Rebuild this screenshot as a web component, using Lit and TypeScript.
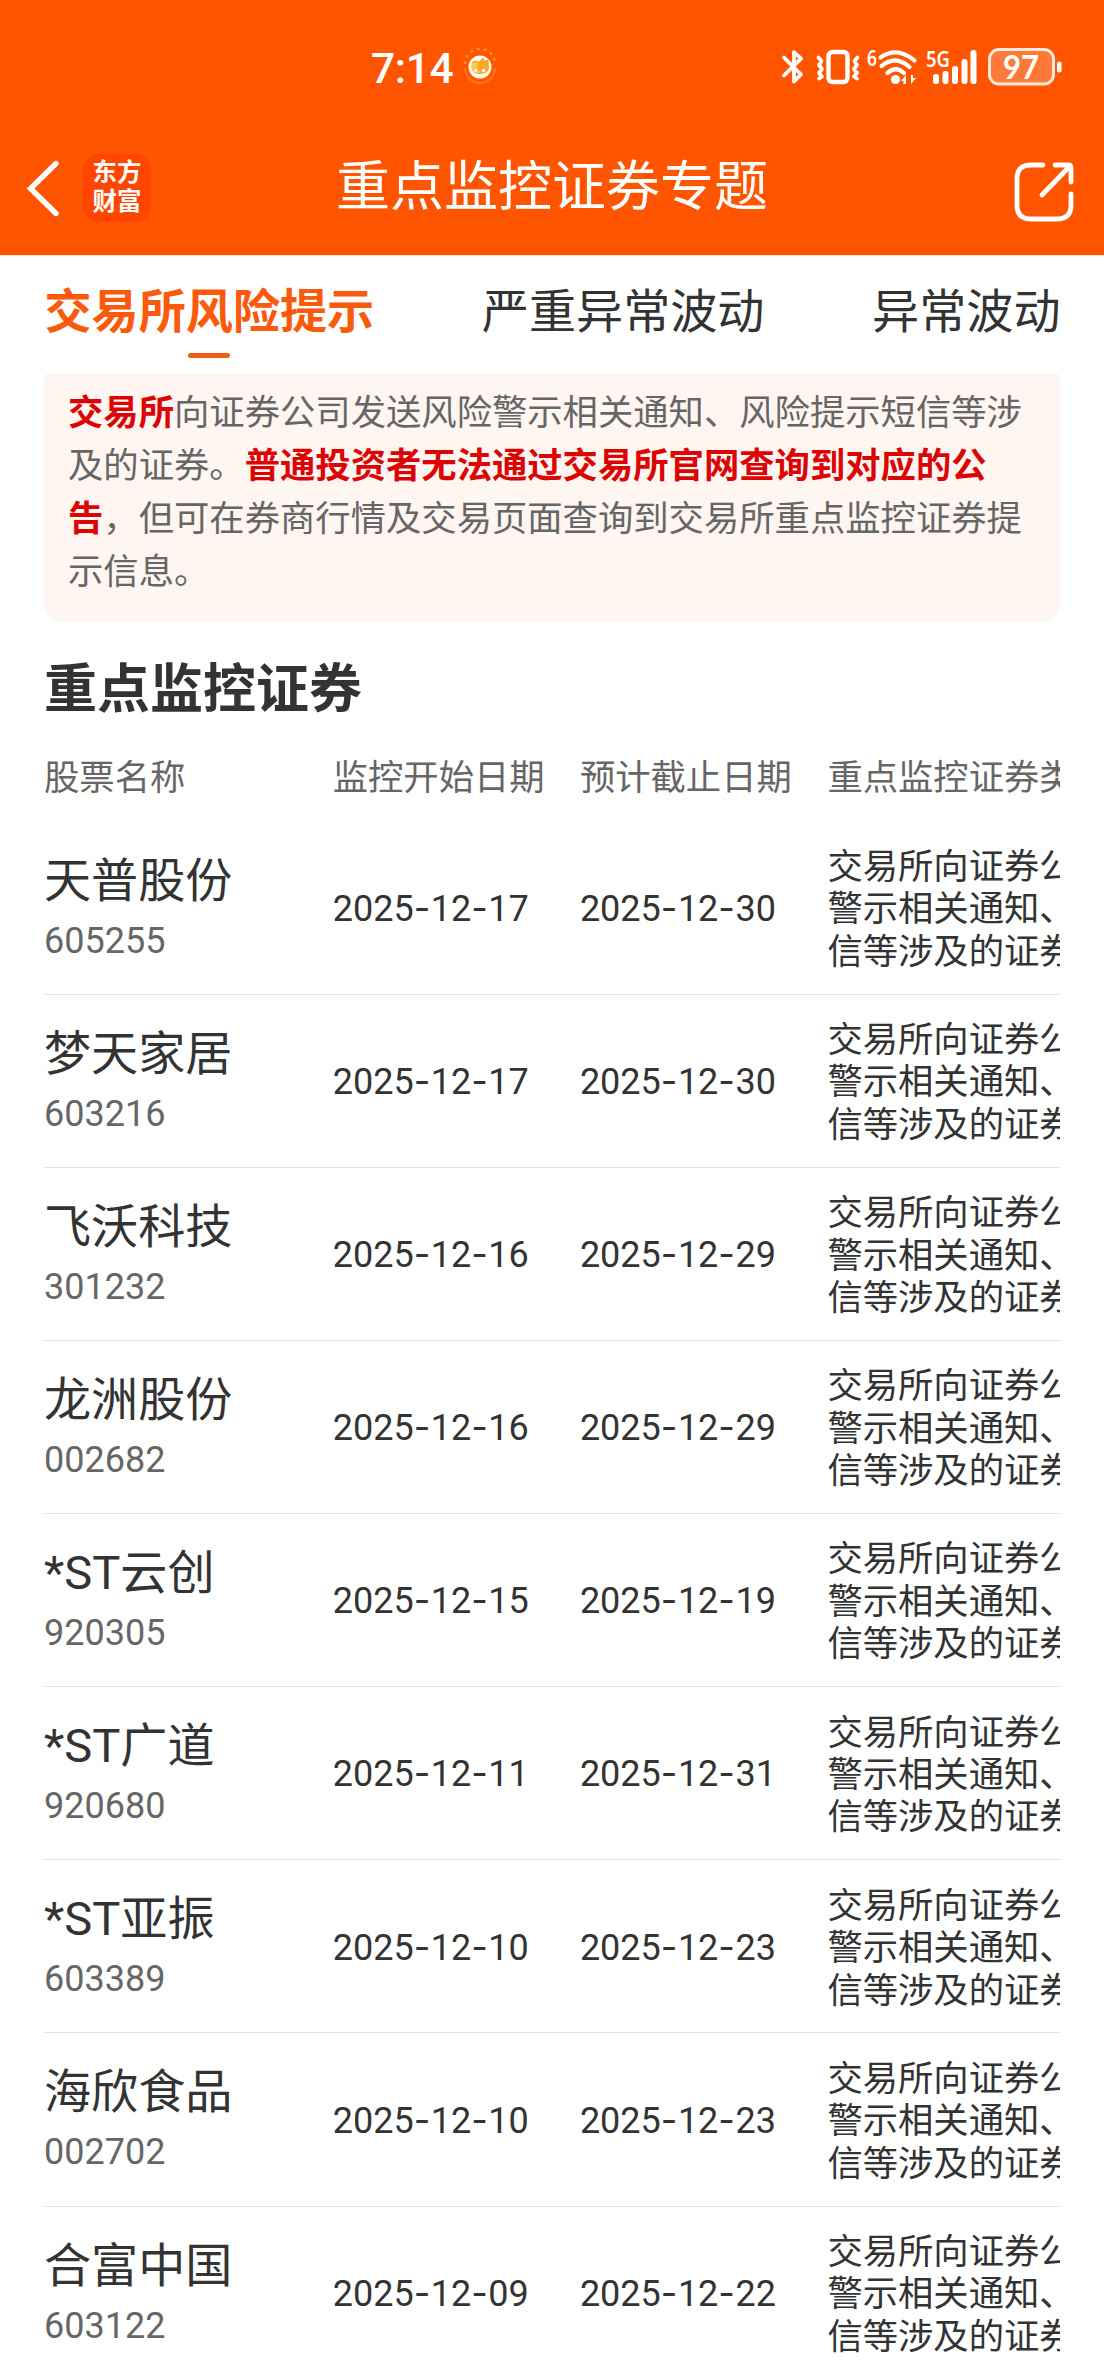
import { LitElement, html, css } from "lit";
import { customElement, property } from "lit/decorators.js";

interface Stock {
  name: string;
  code: string;
  start: string;
  end: string;
}

const STOCKS: Stock[] = [
  { name: "天普股份", code: "605255", start: "2025-12-17", end: "2025-12-30" },
  { name: "梦天家居", code: "603216", start: "2025-12-17", end: "2025-12-30" },
  { name: "飞沃科技", code: "301232", start: "2025-12-16", end: "2025-12-29" },
  { name: "龙洲股份", code: "002682", start: "2025-12-16", end: "2025-12-29" },
  { name: "*ST云创", code: "920305", start: "2025-12-15", end: "2025-12-19" },
  { name: "*ST广道", code: "920680", start: "2025-12-11", end: "2025-12-31" },
  { name: "*ST亚振", code: "603389", start: "2025-12-10", end: "2025-12-23" },
  { name: "海欣食品", code: "002702", start: "2025-12-10", end: "2025-12-23" },
  { name: "合富中国", code: "603122", start: "2025-12-09", end: "2025-12-22" },
];

const TYPE_LINES = ["交易所向证券公", "警示相关通知、", "信等涉及的证券"];

@customElement("status-bar")
class StatusBar extends LitElement {
  static styles = css`
    :host {
      display: flex;
      height: 134px;
      padding: 0 42px 0 371px;
      align-items: center;
      box-sizing: border-box;
      color: #fff;
    }
    .time {
      font: 500 42.500px/50px Roboto, "Noto Sans", sans-serif;
      padding-top: 3px;
      letter-spacing: -0.300px;
    }
    .face {
      margin-left: 10px;
    }
    .spacer {
      flex: 1;
    }
    svg {
      display: block;
      flex: none;
      overflow: visible;
    }
    .bt { margin-right: 12px; }
    .vib { margin-right: 8px; }
    .wifi { margin-right: 8px; }
    .cell { margin-right: 11px; }
    .small {
      font: 600 22px "Noto Sans", sans-serif;
    }
    .level {
      font: 700 33px Lato, "Noto Sans", sans-serif;
    }
  `;

  render() {
    return html`
      <span class="time">7:14</span>
      <svg class="face" width="34" height="34" viewBox="0 0 34 34">
        <path d="M2 14a15 15 0 0 1 30 0" fill="none" stroke="#ff9a1f" stroke-width="2.600" stroke-dasharray="2.600 4.200"></path>
        <path d="M2 18a15 15 0 0 0 30 0" fill="none" stroke="#ff7526" stroke-width="2"></path>
        <circle cx="17" cy="17" r="11.500" fill="#fffbe8"></circle>
        <path d="M9 12l3-1.500 4 1 4-4 2 3 3.500-1 .5 9q-2 5.500-9 5.500t-8.500-6z" fill="#ffa62e"></path>
        <path d="M9 13l5-1q1 8 4 11-8 1-9-5z" fill="#ffc64a"></path>
        <circle cx="12.500" cy="20.500" r="1.500" fill="#fff"></circle>
        <circle cx="20.500" cy="20.500" r="1.700" fill="#fff"></circle>
      </svg>
      <span class="spacer"></span>
      <svg class="bt" width="22" height="36" viewBox="0 0 22 36" fill="none" stroke="#fff" stroke-width="3.800" stroke-linejoin="round" stroke-linecap="round">
        <path d="M2 8.500L19 25.500L12 32.500V3.200L19 9.700L2 26.500"></path>
      </svg>
      <svg class="vib" width="44" height="36" viewBox="0 0 44 36" fill="none" stroke="#fff" stroke-linejoin="round" stroke-linecap="round">
        <rect x="12.500" y="3" width="19" height="30" rx="4" stroke-width="4.400"></rect>
        <path d="M2.500 8.500l3 3.500-2.500 4 3 4-3 4 3 3.500-3 2M41.500 8.500l-3 3.500 2.500 4-3 4 3 4-3 3.500 3 2" stroke-width="3.800"></path>
      </svg>
      <svg class="wifi" width="50" height="38" viewBox="0 0 50 38">
        <text class="small" x="-1" y="18" fill="#fff" textLength="10" lengthAdjust="spacingAndGlyphs">6</text>
        <g fill="none" stroke="#fff" stroke-width="4.200" stroke-linecap="round">
          <path d="M12.500 9.500Q29 -2 46.500 12.500"></path>
          <path d="M13.500 18Q27.500 6.500 41.500 19"></path>
          <path d="M19.500 25Q27.500 17.500 36 25"></path>
        </g>
        <circle cx="27.500" cy="31.500" r="4.600" fill="#fff"></circle>
        <path d="M33 33l5-6v9h-2.600v-3zM48 30l-5 6v-9h2v3z" fill="#fff"></path>
      </svg>
      <svg class="cell" width="51" height="38" viewBox="0 0 51 38" fill="#fff">
        <text class="small" x="0" y="18.500" textLength="24" lengthAdjust="spacingAndGlyphs">5G</text>
        <rect x="7" y="26" width="6" height="10" rx="2.800"></rect>
        <rect x="16.500" y="23" width="6" height="13" rx="2.800"></rect>
        <rect x="26" y="18" width="6" height="18" rx="2.800"></rect>
        <rect x="35.500" y="11" width="6" height="25" rx="2.800"></rect>
        <rect x="44.500" y="2" width="6" height="34" rx="2.800"></rect>
      </svg>
      <svg width="74" height="38" viewBox="0 0 74 38">
        <rect x="1.500" y="1.500" width="64" height="34.500" rx="9.500" fill="#ff7a38" stroke="#ffe9dc" stroke-width="3"></rect>
        <rect x="69" y="13.500" width="4.500" height="11" rx="2" fill="#fff"></rect>
        <text class="level" x="33" y="30.500" text-anchor="middle" fill="#fff" textLength="36" lengthAdjust="spacingAndGlyphs">97</text>
      </svg>
    `;
  }
}

@customElement("title-bar")
class TitleBar extends LitElement {
  static styles = css`
    :host {
      display: grid;
      grid-template-columns: 1fr auto 1fr;
      align-items: center;
      height: 121px;
      box-sizing: border-box;
      padding: 0 28px 14px 24px;
      color: #fff;
    }
    .left {
      display: flex;
      align-items: center;
      gap: 23px;
    }
    .logo {
      width: 68px;
      height: 68px;
      border-radius: 16px;
      background: #ff4500;
      font: 700 24.500px/29px "Noto Sans CJK SC", sans-serif;
      text-align: center;
      box-sizing: border-box;
      padding-top: 2px;
    }
    .title {
      font: 400 54px/64px "Noto Sans CJK SC", sans-serif;
      padding: 0 0 9px 4px;
    }
    .share {
      justify-self: end;
      margin-top: 10px;
    }
    svg {
      display: block;
    }
  `;

  render() {
    return html`
      <div class="left">
        <svg width="36" height="60" viewBox="0 0 36 60" fill="none" stroke="#fff" stroke-width="5.400" stroke-linecap="round" stroke-linejoin="miter">
          <path d="M32 5.500L6.500 30.500L32 55.500"></path>
        </svg>
        <div class="logo">东方<br />财富</div>
      </div>
      <div class="title">重点监控证券专题</div>
      <svg class="share" width="62" height="62" viewBox="0 0 62 62" fill="none" stroke="#fff" stroke-width="4.800" stroke-linecap="round" stroke-linejoin="round">
        <path d="M29 3H17Q3 3 3 17V43Q3 57 17 57H43Q57 57 57 43V32"></path>
        <path d="M41 3H54Q57 3 57 6V20M56 4L28 33"></path>
      </svg>
    `;
  }
}

@customElement("stock-row")
class StockRow extends LitElement {
  @property({ attribute: false }) stock!: Stock;

  static styles = css`
    :host {
      display: grid;
      grid-template-columns: 288.700px 247.200px 247.500px 1fr;
      align-items: center;
      height: 173.140px;
      box-sizing: border-box;
      border-bottom: 1.500px solid #e4e4e4;
      color: #333;
      font: 400 36px/42.400px Roboto, "Noto Sans CJK SC", sans-serif;
    }
    .name {
      font-size: 47.100px;
      line-height: 64px;
    }
    .code {
      color: #666;
      line-height: 56px;
      margin-bottom: -2px;
    }
    .date {
      padding-top: 2px;
    }
    .dash {
      font-family: Inter, sans-serif;
      letter-spacing: 0.500px;
    }
    .type {
      grid-column: 4;
      padding-bottom: 2px;
      font-size: 35.330px;
      font-family: "Noto Sans CJK SC", sans-serif;
      white-space: nowrap;
    }
  `;

  private date(value: string) {
    return value
      .split("-")
      .map((part, i) => (i ? html`<span class="dash">-</span>${part}` : part));
  }

  render() {
    const s = this.stock;
    return html`
      <div>
        <div class="name">${s.name}</div>
        <div class="code">${s.code}</div>
      </div>
      <div class="date">${this.date(s.start)}</div>
      <div class="date">${this.date(s.end)}</div>
      <div class="type">${TYPE_LINES.map((line) => html`<div>${line}</div>`)}</div>
    `;
  }
}

@customElement("app-root")
class AppRoot extends LitElement {
  static styles = css`
    :host {
      display: block;
      width: 1104px;
      height: 2376px;
      overflow: hidden;
      background: #fff;
      font-family: "Noto Sans CJK SC", sans-serif;
    }
    .top {
      background: #ff5500;
      border-bottom: 1px solid #ffe3c4;
    }
    .tabs {
      display: flex;
      justify-content: space-between;
      height: 117px;
      box-sizing: border-box;
      padding: 17px 43.500px 0 44.500px;
      font-size: 47.100px;
      line-height: 70px;
      color: #333;
    }
    .tab {
      display: flex;
      flex-direction: column;
      align-items: center;
    }
    .active {
      color: #fa5a0c;
      font-weight: 700;
    }
    .active::after {
      content: "";
      width: 42px;
      height: 5px;
      margin-top: 10px;
      border-radius: 3px;
      background: #f25c12;
    }
    .notice {
      margin: 0 44px;
      height: 249px;
      box-sizing: border-box;
      padding: 9.500px 24px 0;
      border-radius: 5px 5px 18px 18px;
      background: #fff5f1;
      color: #666;
      font-size: 35.330px;
      line-height: 53px;
    }
    .notice b {
      color: #dc0404;
      font-weight: 700;
    }
    .heading {
      margin: 24px 44px 0;
      font-size: 53px;
      line-height: 78px;
      font-weight: 700;
      color: #333;
    }
    .table {
      margin: 0 44px;
      overflow: hidden;
    }
    .head {
      display: grid;
      grid-template-columns: 288.700px 247.200px 247.500px 1fr;
      height: 97.500px;
      box-sizing: border-box;
      padding-top: 4px;
      align-items: center;
      font-size: 35.330px;
      line-height: 50px;
      color: #666;
      white-space: nowrap;
    }
    .head div {
      min-width: 0;
    }
  `;

  render() {
    return html`
      <div class="top">
        <status-bar></status-bar>
        <title-bar></title-bar>
      </div>
      <div class="tabs">
        <div class="tab active">交易所风险提示</div>
        <div class="tab">严重异常波动</div>
        <div class="tab">异常波动</div>
      </div>
      <div class="notice" lang="zh-CN"><b>交易所</b>向证券公司发送风险警示相关通知、风险提示短信等涉及的证券。<b>普通投资者无法通过交易所官网查询到对应的公告</b>，但可在券商行情及交易页面查询到交易所重点监控证券提示信息。</div>
      <div class="heading">重点监控证券</div>
      <div class="table">
        <div class="head">
          <div>股票名称</div>
          <div>监控开始日期</div>
          <div>预计截止日期</div>
          <div>重点监控证券类型</div>
        </div>
        ${STOCKS.map((s) => html`<stock-row .stock=${s}></stock-row>`)}
      </div>
    `;
  }
}
